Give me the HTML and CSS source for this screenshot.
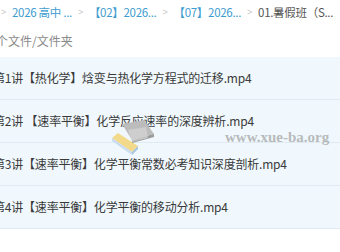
FILE: index.html
```html
<!DOCTYPE html>
<html lang="zh">
<head>
<meta charset="utf-8">
<link rel="stylesheet" href="styles.css">
</head>
<body>
<div class="page">
  <nav class="crumbs">
    <span class="sep">&gt;</span>
    <span class="link">2026 高中 ...</span>
    <span class="sep">&gt;</span>
    <span class="link">【02】2026...</span>
    <span class="sep">&gt;</span>
    <span class="link">【07】2026...</span>
    <span class="sep">&gt;</span>
    <span class="current">01.暑假班（S...</span>
  </nav>
  <div class="count">个文件/文件夹</div>
  <ul class="list">
    <li class="row"><span class="name">第1讲【热化学】焓变与热化学方程式的迁移.mp4</span></li>
    <li class="row"><span class="name">第2讲 【速率平衡】化学反应速率的深度辨析.mp4</span></li>
    <li class="row"><span class="name">第3讲【速率平衡】化学平衡常数必考知识深度剖析.mp4</span></li>
    <li class="row"><span class="name">第4讲【速率平衡】化学平衡的移动分析.mp4</span></li>
  </ul>
  <div class="watermark">
    <svg class="cap" width="54" height="40" viewBox="0 0 54 40">
      <polygon points="4,22 24,36 30,30 10,17" fill="#f3d98a"/>
      <polygon points="4,22 24,36 24,39 4,25" fill="#c9dcef"/>
      <polygon points="24,36 30,30 30,33 24,39" fill="#a9c4e0"/>
      <polygon points="14,8 36,4 46,18 24,24" fill="#bcbcbc"/>
      <polygon points="24,24 46,18 46,21 24,27" fill="#9a9a9a"/>
      <polygon points="20,14 38,11 40,22 24,26" fill="#d6d6d6" opacity="0.7"/>
    </svg>
    <span class="wm-text">www.xue-ba.org</span>
  </div>
</div>
</body>
</html>
```
FILE: styles.css
```css
html, body {
  margin: 0;
  padding: 0;
  background: #ffffff;
  overflow: hidden;
}
.page {
  position: relative;
  width: 340px;
  height: 252px;
  overflow: hidden;
  font-family: "Noto Sans CJK SC", "Noto Sans", sans-serif;
  font-size: 12px;
}
.crumbs {
  display: flex;
  align-items: center;
  height: 24px;
  margin-left: -1px;
  white-space: nowrap;
  gap: 4px;
  line-height: 24px;
  font-size: 11.5px;
  letter-spacing: -0.3px;
}
.sep {
  color: #c8c8c8;
  font-size: 9px;
  font-family: "Liberation Sans", sans-serif;
  margin: 0 2px;
}
.link {
  color: #3d9ccf;
}
.current {
  color: #555;
}
.count {
  height: 33px;
  line-height: 34px;
  color: #8a8a8a;
  margin-left: -4px;
}
.list {
  list-style: none;
  margin: 0;
  padding: 0;
}
.row {
  height: 42px;
  line-height: 42px;
  background: #f0f8fd;
  border-bottom: 1px solid #dfeaf2;
  color: #3a3a3a;
  white-space: nowrap;
  overflow: hidden;
}
.name {
  display: inline-block;
  margin-left: -7px;
  letter-spacing: -0.2px;
}
.watermark {
  position: absolute;
  left: 108px;
  top: 116px;
  width: 232px;
  height: 40px;
  pointer-events: none;
}
.cap {
  position: absolute;
  left: 0;
  top: 0;
}
.wm-text {
  position: absolute;
  left: 117px;
  top: 12px;
  white-space: nowrap;
  font-family: "Liberation Serif", serif;
  font-weight: bold;
  font-size: 15px;
  line-height: 18px;
  color: rgba(165, 165, 165, 0.75);
}
```
